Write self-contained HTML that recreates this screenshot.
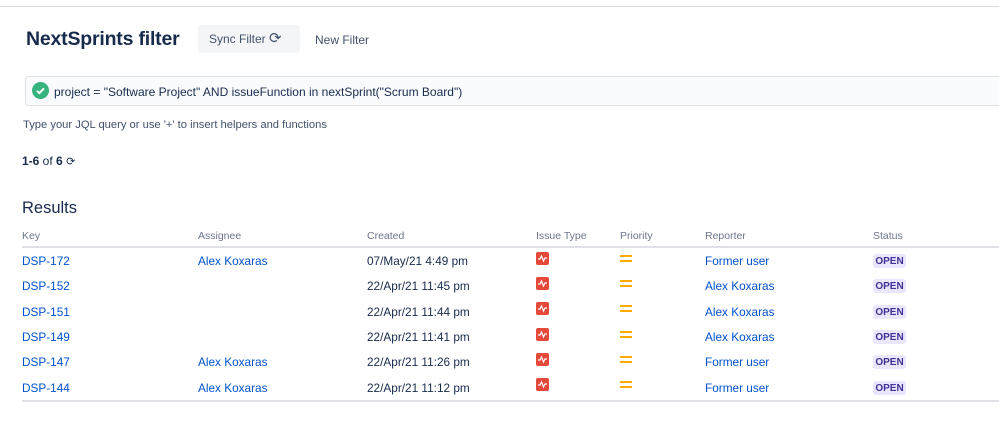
<!DOCTYPE html>
<html><head><style>
body{margin:0;width:999px;height:430px;background:#fff;font-family:"Liberation Sans",sans-serif;position:relative;overflow:hidden;color:#172b4d}
.a{position:absolute;white-space:nowrap}
.top{left:0;top:6px;width:999px;height:1px;background:#d7d9de}
.h1{left:26px;top:28px;font-size:19.5px;font-weight:bold;color:#172b4d;letter-spacing:-0.2px}
.sync{left:198px;top:25px;width:102px;height:28px;background:#f4f5f7;border-radius:3px;font-size:12px;color:#42526e;line-height:28px;text-indent:11px}
.nf{left:315px;top:33px;font-size:12px;color:#42526e}
.jql{left:25px;top:76px;width:980px;height:28px;border:1px solid #dfe1e6;background:#fafbfc;border-radius:3px}
.chk{left:32px;top:82px;width:17px;height:17px;border-radius:50%;background:#36b37e}
.q{left:54px;top:85px;font-size:12px;color:#172b4d}
.help{left:23px;top:119px;font-size:11.2px;color:#42526e}
.cnt{left:22px;top:154px;font-size:12px}
.res{left:22px;top:199px;font-size:16.5px;color:#172b4d}
.th{top:230px;font-size:10.5px;color:#6b778c}
.line{left:22px;width:977px;height:2px;background:#dfe1e6}
.td{font-size:11.8px;color:#172b4d}
.lk{color:#0052cc}
.ico{width:13px;height:13px;background:#e5493a;border-radius:2px}
.pr{width:12px;height:3px;border-top:2px solid #ffab00;border-bottom:2px solid #ffab00;box-sizing:content-box}
.loz{width:33px;height:14px;background:#eae6ff;border-radius:3px;font-size:10px;font-weight:bold;color:#403294;text-align:center;line-height:15px}
</style></head><body>
<div class="a top"></div>
<div class="a h1">NextSprints filter</div>
<div class="a sync">Sync Filter <span style="font-size:15px;color:#42526e">⟳</span></div>
<div class="a nf">New Filter</div>
<div class="a jql"></div>
<div class="a chk"><svg width="17" height="17"><path d="M5 8.8l2.4 2.3L12 6.3" stroke="#fff" stroke-width="2" fill="none"/></svg></div>
<div class="a q">project = "Software Project" AND issueFunction in nextSprint("Scrum Board")</div>
<div class="a help">Type your JQL query or use '+' to insert helpers and functions</div>
<div class="a cnt"><b>1-6</b> of <b>6</b> <span style="font-size:11px">⟳</span></div>
<div class="a res">Results</div>
<div class="a th" style="left:22px">Key</div>
<div class="a th" style="left:198px">Assignee</div>
<div class="a th" style="left:367px">Created</div>
<div class="a th" style="left:536px">Issue Type</div>
<div class="a th" style="left:620px">Priority</div>
<div class="a th" style="left:705px">Reporter</div>
<div class="a th" style="left:873px">Status</div>
<div class="a line" style="top:246px"></div>
<div class="a line" style="top:400px"></div>
<svg width="0" height="0" style="position:absolute"><defs><symbol id="w" viewBox="0 0 13 13"><rect width="13" height="13" rx="2" fill="#e5493a"/><path d="M2 7h2l1.5-3 2 5 1.5-3h2" stroke="#fff" stroke-width="1.2" fill="none"/></symbol></defs></svg>

<div class="a td lk" style="left:22px;top:254px">DSP-172</div><div class="a td lk" style="left:198px;top:254px">Alex Koxaras</div><div class="a td" style="left:367px;top:254px">07/May/21 4:49 pm</div><svg class="a" width="13" height="13" style="left:536px;top:252px"><use href="#w"/></svg><div class="a pr" style="left:620px;top:255px"></div><div class="a td lk" style="left:705px;top:254px">Former user</div><div class="a loz" style="left:873px;top:254px">OPEN</div>
<div class="a td lk" style="left:22px;top:279px">DSP-152</div><div class="a td" style="left:367px;top:279px">22/Apr/21 11:45 pm</div><svg class="a" width="13" height="13" style="left:536px;top:277px"><use href="#w"/></svg><div class="a pr" style="left:620px;top:280px"></div><div class="a td lk" style="left:705px;top:279px">Alex Koxaras</div><div class="a loz" style="left:873px;top:279px">OPEN</div>
<div class="a td lk" style="left:22px;top:305px">DSP-151</div><div class="a td" style="left:367px;top:305px">22/Apr/21 11:44 pm</div><svg class="a" width="13" height="13" style="left:536px;top:302px"><use href="#w"/></svg><div class="a pr" style="left:620px;top:305px"></div><div class="a td lk" style="left:705px;top:305px">Alex Koxaras</div><div class="a loz" style="left:873px;top:305px">OPEN</div>
<div class="a td lk" style="left:22px;top:330px">DSP-149</div><div class="a td" style="left:367px;top:330px">22/Apr/21 11:41 pm</div><svg class="a" width="13" height="13" style="left:536px;top:328px"><use href="#w"/></svg><div class="a pr" style="left:620px;top:331px"></div><div class="a td lk" style="left:705px;top:330px">Alex Koxaras</div><div class="a loz" style="left:873px;top:330px">OPEN</div>
<div class="a td lk" style="left:22px;top:355px">DSP-147</div><div class="a td lk" style="left:198px;top:355px">Alex Koxaras</div><div class="a td" style="left:367px;top:355px">22/Apr/21 11:26 pm</div><svg class="a" width="13" height="13" style="left:536px;top:353px"><use href="#w"/></svg><div class="a pr" style="left:620px;top:356px"></div><div class="a td lk" style="left:705px;top:355px">Former user</div><div class="a loz" style="left:873px;top:355px">OPEN</div>
<div class="a td lk" style="left:22px;top:381px">DSP-144</div><div class="a td lk" style="left:198px;top:381px">Alex Koxaras</div><div class="a td" style="left:367px;top:381px">22/Apr/21 11:12 pm</div><svg class="a" width="13" height="13" style="left:536px;top:378px"><use href="#w"/></svg><div class="a pr" style="left:620px;top:381px"></div><div class="a td lk" style="left:705px;top:381px">Former user</div><div class="a loz" style="left:873px;top:381px">OPEN</div>
</body></html>
